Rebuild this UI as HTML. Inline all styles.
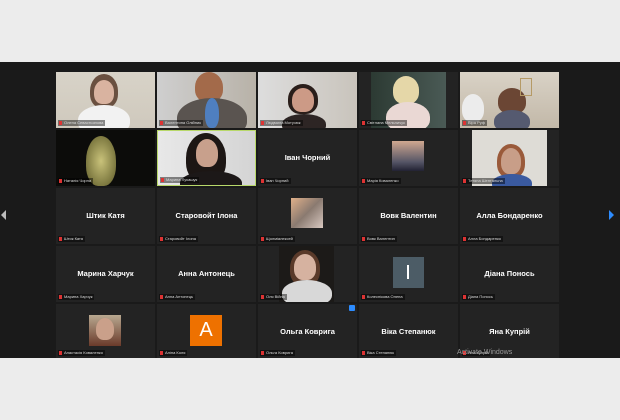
<!DOCTYPE html>
<html><head><meta charset="utf-8"><style>
*{margin:0;padding:0;box-sizing:border-box}
body{width:620px;height:420px;background:#ececec;position:relative;overflow:hidden;font-family:"Liberation Sans",sans-serif}
#blk{position:absolute;left:0;top:62px;width:620px;height:296px;background:#1a1a1a}
.t{position:absolute;width:99px;height:56px;background:#232323;overflow:hidden}
.n{position:absolute;left:0;right:0;top:23px;text-align:center;color:#fff;font-weight:bold;font-size:7.5px}
.l{position:absolute;left:2px;bottom:2px;color:#ddd;font-size:4px;background:rgba(0,0,0,.45);padding:0 2px 0 6px;line-height:6px}
.l:before{content:"";position:absolute;left:1px;top:1px;width:3px;height:4px;background:#d33}
.v{position:absolute}
.p{position:absolute;border-radius:50% 50% 40% 40%}
</style></head><body>
<div id="blk"></div>
<div style="position:absolute;left:1px;top:210px;width:0;height:0;border-top:5px solid transparent;border-bottom:5px solid transparent;border-right:5px solid #bbb"></div>
<div style="position:absolute;left:609px;top:210px;width:0;height:0;border-top:5px solid transparent;border-bottom:5px solid transparent;border-left:5px solid #2d8cff"></div>

<!-- row1 -->
<div class="t" style="left:56px;top:72px;background:linear-gradient(#d8d3c8,#cfc9bd)"><div class="p" style="left:34px;top:2px;width:28px;height:34px;background:#6a5040"></div><div class="p" style="left:38px;top:8px;width:20px;height:24px;background:#d9b3a0"></div><div class="p" style="left:22px;top:33px;width:52px;height:30px;background:#f2f2f2"></div><div class="l">Олена Севастьянова</div></div>
<div class="t" style="left:157px;top:72px;background:linear-gradient(90deg,#cfcfcf,#b8b2a8)"><div class="p" style="left:38px;top:0;width:28px;height:30px;background:#a36a4a"></div><div class="p" style="left:20px;top:26px;width:70px;height:40px;background:#5a5450"></div><div class="p" style="left:48px;top:26px;width:14px;height:30px;background:#4f7fc0"></div><div class="l">Валентина Олійник</div></div>
<div class="t" style="left:258px;top:72px;background:linear-gradient(90deg,#ddd,#c9c4bc)"><div class="p" style="left:30px;top:12px;width:30px;height:30px;background:#2a1e1a"></div><div class="p" style="left:34px;top:16px;width:22px;height:24px;background:#cc9a86"></div><div class="p" style="left:24px;top:42px;width:44px;height:20px;background:#2d2524"></div><div class="l">Людмила Мотузюк</div></div>
<div class="t" style="left:359px;top:72px;background:#232323"><div class="v" style="left:12px;top:0;width:75px;height:56px;background:linear-gradient(90deg,#2c3a33,#4a5a55)"></div><div class="p" style="left:34px;top:4px;width:26px;height:28px;background:#e5d7a8"></div><div class="p" style="left:27px;top:30px;width:44px;height:30px;background:#ead8d4"></div><div class="l">Світлана Мельничук</div></div>
<div class="t" style="left:460px;top:72px;background:linear-gradient(#d9d2c6,#c2b8a8)"><div class="p" style="left:2px;top:22px;width:22px;height:28px;background:#ececec"></div><div class="p" style="left:38px;top:16px;width:28px;height:26px;background:#6b4634"></div><div class="p" style="left:34px;top:38px;width:36px;height:22px;background:#555a70"></div><div class="v" style="left:60px;top:6px;width:12px;height:18px;border:1px solid #b59a66"></div><div class="l">Віра Руф</div></div>
<!-- row2 -->
<div class="t" style="left:56px;top:130px;background:#0c0c0a"><div class="p" style="left:30px;top:6px;width:30px;height:50px;background:radial-gradient(#c9c27a,#5d5a28)"></div><div class="l">Наталія Чорна</div></div>
<div class="t" style="left:157px;top:130px;background:linear-gradient(90deg,#e8e8e8,#d4d4d4);border:1px solid #b8d86a"><div class="p" style="left:28px;top:2px;width:40px;height:50px;background:#1c1614"></div><div class="p" style="left:38px;top:8px;width:22px;height:28px;background:#c8a08c"></div><div class="p" style="left:22px;top:40px;width:62px;height:24px;background:#1c1818"></div><div class="l">Марина Лукашук</div></div>
<div class="t" style="left:258px;top:130px"><div class="n">Іван Чорний</div><div class="l">Іван Чорний</div></div>
<div class="t" style="left:359px;top:130px"><div class="v" style="left:33px;top:11px;width:32px;height:30px;background:linear-gradient(#d0a890,#556 70%,#223)"></div><div class="l">Марія Коваленко</div></div>
<div class="t" style="left:460px;top:130px"><div class="v" style="left:12px;top:0;width:75px;height:56px;background:#dedcd6"></div><div class="p" style="left:37px;top:14px;width:28px;height:34px;background:#9a5a3a"></div><div class="p" style="left:41px;top:18px;width:20px;height:26px;background:#c89e88"></div><div class="p" style="left:32px;top:44px;width:40px;height:18px;background:#3a5aa0"></div><div class="l">Тетяна Шептальна</div></div>
<!-- row3 -->
<div class="t" style="left:56px;top:188px"><div class="n">Штик Катя</div><div class="l">Штик Катя</div></div>
<div class="t" style="left:157px;top:188px"><div class="n">Старовойт Ілона</div><div class="l">Старовойт Ілона</div></div>
<div class="t" style="left:258px;top:188px"><div class="v" style="left:33px;top:10px;width:32px;height:30px;background:linear-gradient(135deg,#e0b08a,#8a7a70,#d8c8c0)"></div><div class="l">Щолміалексей</div></div>
<div class="t" style="left:359px;top:188px"><div class="n">Вовк Валентин</div><div class="l">Вовк Валентин</div></div>
<div class="t" style="left:460px;top:188px"><div class="n">Алла Бондаренко</div><div class="l">Алла Бондаренко</div></div>
<!-- row4 -->
<div class="t" style="left:56px;top:246px"><div class="n">Марина Харчук</div><div class="l">Марина Харчук</div></div>
<div class="t" style="left:157px;top:246px"><div class="n">Анна Антонець</div><div class="l">Анна Антонець</div></div>
<div class="t" style="left:258px;top:246px"><div class="v" style="left:21px;top:0;width:55px;height:56px;background:#1c1a18"></div><div class="p" style="left:32px;top:4px;width:30px;height:36px;background:#5a3a2a"></div><div class="p" style="left:36px;top:8px;width:22px;height:26px;background:#d6b2a0"></div><div class="p" style="left:24px;top:34px;width:50px;height:26px;background:#d8d8d8"></div><div class="l">Оля Війна</div></div>
<div class="t" style="left:359px;top:246px"><div class="v" style="left:34px;top:11px;width:31px;height:31px;background:#4c5c66"></div><div class="v" style="left:48px;top:19px;width:2px;height:14px;background:#fff"></div><div class="l">Колеснікова Олена</div></div>
<div class="t" style="left:460px;top:246px"><div class="n">Діана Понось</div><div class="l">Діана Понось</div></div>
<!-- row5 -->
<div class="t" style="left:56px;top:304px;height:54px"><div class="v" style="left:33px;top:11px;width:32px;height:31px;background:linear-gradient(#b8a890,#6a3a2a)"></div><div class="p" style="left:40px;top:14px;width:18px;height:22px;background:#caa08a"></div><div class="l">Анастасія Коваленко</div></div>
<div class="t" style="left:157px;top:304px;height:54px"><div class="v" style="left:33px;top:11px;width:32px;height:31px;background:#ee7100;color:#fff;font-size:20px;text-align:center;line-height:31px">A</div><div class="l">Аліна Коля</div></div>
<div class="t" style="left:258px;top:304px;height:54px"><div class="v" style="right:2px;top:1px;width:6px;height:6px;background:#2d8cff;border-radius:1px"></div><div class="n">Ольга Коврига</div><div class="l">Ольга Коврига</div></div>
<div class="t" style="left:359px;top:304px;height:54px"><div class="n">Віка Степанюк</div><div class="l">Віка Степанюк</div></div>
<div class="t" style="left:460px;top:304px;height:54px"><div class="n">Яна Купрій</div><div class="l">Яна Купрій</div></div>
<div style="position:absolute;left:457px;top:349px;color:#9a9a9a;font-size:7px">Activate Windows</div>
</body></html>
